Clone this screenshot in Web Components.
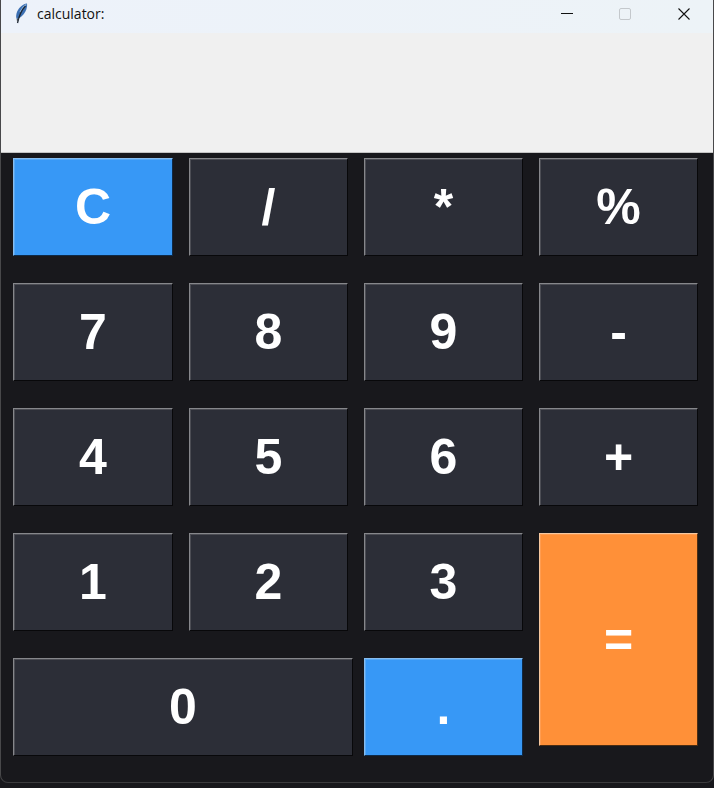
<!DOCTYPE html>
<html><head><meta charset="utf-8"><title>calculator</title>
<style>
html,body{margin:0;padding:0;background:#18181c;}
body{width:714px;height:788px;overflow:hidden;font-family:"Liberation Sans",Arial,sans-serif;}
</style></head><body>
<calc-window>
  <title-bar slot="title">calculator:</title-bar>
  <calc-display slot="display"></calc-display>
  <calc-keypad slot="keys">
    <calc-key tone="blue">C</calc-key><calc-key>/</calc-key><calc-key>*</calc-key><calc-key>%</calc-key>
    <calc-key>7</calc-key><calc-key>8</calc-key><calc-key>9</calc-key><calc-key>-</calc-key>
    <calc-key>4</calc-key><calc-key>5</calc-key><calc-key>6</calc-key><calc-key>+</calc-key>
    <calc-key>1</calc-key><calc-key>2</calc-key><calc-key>3</calc-key><calc-key tone="orange" class="eq">=</calc-key>
    <calc-key class="zero">0</calc-key><calc-key tone="blue">.</calc-key>
  </calc-keypad>
</calc-window>
<script>
function def(name,html){
  customElements.define(name,class extends HTMLElement{
    constructor(){super();this.attachShadow({mode:"open"}).innerHTML=html;}
  });
}
def("calc-window",`<style>
:host{display:flex;flex-direction:column;width:714px;height:788px;box-sizing:border-box;background:#18181c;position:relative;}
.edge{position:absolute;left:0;right:0;top:0;bottom:5px;border:1px solid #48484a;border-top:0;border-bottom-color:#3c3c3e;border-radius:0 0 8px 8px;pointer-events:none;z-index:2;}
</style><slot name="title"></slot><slot name="display"></slot><slot name="keys"></slot><div class="edge"></div>`);
def("title-bar",`<style>
:host{display:flex;align-items:flex-start;height:33px;flex:none;background:linear-gradient(90deg,#edf2fa,#edf3f7);color:#111;font:14px/1 "Open Sans","Liberation Sans",sans-serif;}
.ic{margin:3px 0 0 14px;width:15px;height:21px;flex:none;display:block;}
.t{margin:7px 0 0 8px;flex:1;}
.b{width:58px;height:28px;flex:none;display:flex;align-items:center;justify-content:center;}
svg{display:block}
</style>
<svg class="ic" viewBox="0 0 15 21"><path d="M13 .5C8.500 1 4 5 2.500 10.500c-.5 2-.5 4 .2 5.500C7 15 10.500 11 12.300 6.500c.6-1.800 1-4 .7-6z" fill="#3b6fb2"/><path d="M12.300 1.500C10 3 7.500 5.500 6 9" fill="none" stroke="#8db4de" stroke-width="1.200"/><path d="M11.500 3C8 6.500 5.200 12 3.500 20" fill="none" stroke="#1d2733" stroke-width="1.300"/><path d="M2.700 16l2-1-1.500 5z" fill="#4a4f55"/></svg>
<span class="t"><slot></slot></span>
<span class="b"><svg width="12" height="2"><rect width="12" height="1" y="0" fill="#111"/></svg></span>
<span class="b" style="margin-right:1px"><svg width="12" height="12"><rect x=".5" y=".5" width="11" height="11" rx="1.500" fill="none" stroke="#c4c8cc"/></svg></span>
<span class="b" style="margin-right:1px"><svg width="12" height="12"><path d="M.5 .5l11 11M11.500 .5l-11 11" stroke="#111" stroke-width="1.100"/></svg></span>`);
def("calc-display",`<style>
:host{display:block;height:120px;flex:none;background:#f0f0f0;border-bottom:1px solid #c4c4c4;box-sizing:border-box;}
</style>`);
def("calc-keypad",`<style>
:host{display:grid;grid-template-columns:161px repeat(3,160px);grid-auto-rows:99px;column-gap:15px;row-gap:26px;padding:5px 0 0 13px;}
::slotted(calc-key){width:159px;height:98px;align-self:start;justify-self:start;}
::slotted(:nth-child(4n+1)){width:160px;}
::slotted(.zero){grid-column:span 2;width:340px;}
::slotted(.eq){grid-row:span 2;height:213px;}
</style><slot></slot>`);
customElements.define("calc-key",class extends HTMLElement{
  constructor(){super();this.attachShadow({mode:"open"}).innerHTML=`<style>
:host{display:flex;align-items:center;justify-content:center;box-sizing:border-box;--f:#2c2e37;--hi:#86878b;--soft:#4c4d54;--lo:#08080a;
background:var(--f);color:#fff;font:700 50px/1 "Liberation Sans",Arial,sans-serif;
border:solid 1px;border-color:var(--hi) var(--lo) var(--lo) var(--hi);box-shadow:inset 1px 1px 0 var(--soft);}
:host([tone=blue]){--f:#3798f6;--hi:#86bdf0;--soft:#58a8f4;--lo:#0e2a48;}
:host([tone=orange]){--f:#ff9038;--hi:#f6c8a0;--soft:#ff9c50;--lo:#4a2c12;}
</style><slot></slot>`;}
});
</script>
</body></html>
